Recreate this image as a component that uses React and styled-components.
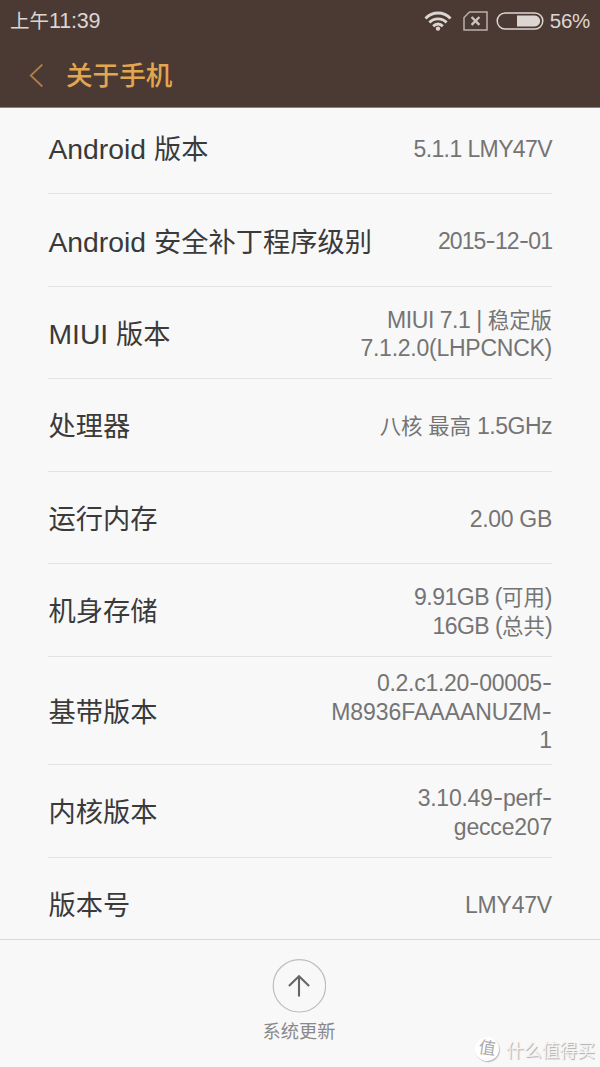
import React from 'react'
import styled, { createGlobalStyle } from 'styled-components'

const GlobalStyle = createGlobalStyle`
  * {
    box-sizing: border-box;
  }

  body {
    margin: 0;
    background: #f8f8f8;
    font-family: "Liberation Sans", "Noto Sans CJK SC", sans-serif;
  }
`

const Phone = styled.div`
  display: flex;
  flex-direction: column;
  width: 600px;
  height: 1067px;
  overflow: hidden;
  background: #f8f8f8;
`

const Header = styled.header`
  flex: none;
  height: 108px;
  background: #4b3a33;
  border-bottom: 1px solid #8b807b;
`

const StatusBar = styled.div`
  display: flex;
  align-items: center;
  height: 42px;
  padding: 0 10px 0 10px;
  color: #dcd6d3;
  font-size: 19.5px;
`

const Time = styled.span`
  flex: 1;
  line-height: 24px;
`

const StatusIcons = styled.div`
  display: flex;
  align-items: center;
  gap: 6px;
`

const TitleBar = styled.div`
  display: flex;
  align-items: center;
  height: 65px;
  padding: 2px 0 0 28px;
  gap: 22px;
`

const Title = styled.h1`
  margin: 0;
  color: #e3a650;
  font-size: 26.6px;
  font-weight: 500;
  line-height: 40px;
`

const List = styled.main`
  flex: 1;
  min-height: 0;
  overflow: hidden;
  padding: 0 48px;
`

const Rows = styled.div`
  margin-top: -6px;
`

const Row = styled.div`
  display: flex;
  align-items: center;
  justify-content: space-between;
  height: ${p => p.$height}px;
  padding-top: 3px;
  border-bottom: 1px solid #e3e3e3;
`

const Label = styled.div`
  padding: 1px 0 0 .5px;
  color: #3a3a3a;
  font-size: 27.25px;
  line-height: 34px;
  white-space: pre;
`

const Value = styled.div`
  color: #747474;
  font-size: 21.4px;
  text-align: right;
`

const Line = styled.div`
  height: 28.4px;
  line-height: 28.4px;
  white-space: pre;
`

const Latin = styled.span`
  font-size: ${p => p.$size}px;
  letter-spacing: ${p => p.$track || 0}px;
`

const Hyphen = styled.span`
  font-family: Inter, sans-serif;
  font-size: 23px;
  line-height: 1;
`

const Footer = styled.footer`
  position: relative;
  flex: none;
  display: flex;
  flex-direction: column;
  align-items: center;
  height: 128px;
  padding: 19px 2px 0 0;
  border-top: 1px solid #d9d9d9;
`

const UpdateLabel = styled.span`
  margin-top: 5px;
  color: #898989;
  font-size: 18.2px;
  line-height: 28px;
`

const Watermark = styled.div`
  position: absolute;
  right: 5px;
  bottom: 5px;
  display: flex;
  align-items: center;
  gap: 7px;
  height: 26px;
  color: #f4f4f4;
  font-size: 17.8px;
  text-shadow: 1px 1px 1px #aaa;
`

const Seal = styled.span`
  width: 24px;
  height: 24px;
  border-radius: 50%;
  background: #fff;
  box-shadow: 1px 1px 1px #bbb;
  color: #aaa;
  font-size: 17px;
  line-height: 23px;
  text-align: center;
  text-shadow: none;
  transform: rotate(8deg);
`

const rows = [
  { label: 'Android 版本', height: 92, lines: [['5.1.1 LMY47V', -0.6]] },
  { label: 'Android 安全补丁程序级别', height: 93, lines: [['2015-12-01', -0.95]] },
  { label: 'MIUI 版本', height: 92, lines: [['MIUI 7.1 | 稳定版', -0.45], ['7.1.2.0(LHPCNCK)', -0.25]] },
  { label: '处理器', height: 93, lines: [['八核 最高 1.5GHz', -0.5]] },
  { label: '运行内存', height: 92, lines: [['2.00 GB', -0.3]] },
  { label: '机身存储', height: 93, lines: [['9.91GB (可用)', -0.5], ['16GB (总共)', -0.55]] },
  { label: '基带版本', height: 108, lines: [['0.2.c1.20-00005-', -0.3], ['M8936FAAAANUZM-', -0.05], ['1', 0]] },
  { label: '内核版本', height: 93, lines: [['3.10.49-perf-', -0.25], ['gecce207', -0.2]] },
  { label: '版本号', height: 93, lines: [['LMY47V', -0.2]] },
]

// Latin runs are set a little larger than the Chinese around them
function Mixed({ text, size, track }) {
  return text.split(/([\x20-\x7e]+)/).filter(Boolean).map((part, i) => (
    /[\x20-\x7e]/.test(part)
      ? (
        <Latin key={i} $size={size} $track={track}>
          {part.split(/(-)/).map((s, j) => s === '-' ? <Hyphen key={j}>-</Hyphen> : s)}
        </Latin>
      )
      : part
  ))
}

function WifiIcon() {
  return (
    <svg width="28" height="20" viewBox="0 0 28 20" fill="none" stroke="#dcd6d3" strokeWidth="2.9">
      <path d="M1.5 7.5C8.5 .2 19.5 .2 26.5 7.5" />
      <path d="M5.4 11.5C10.2 6.6 17.8 6.6 22.6 11.5" />
      <path d="M9.2 15.2C12 12.2 16 12.2 18.8 15.2" />
      <circle cx="14" cy="17.6" r="2.2" fill="#dcd6d3" stroke="none" />
    </svg>
  )
}

function NoSimIcon() {
  return (
    <svg width="25" height="20" viewBox="0 0 25 20" fill="none" stroke="#b9b1ad">
      <path d="M6.5 1H24V19H1V6.5Z" strokeWidth="1.5" />
      <path d="M8.6 6L16.4 13.8M16.4 6L8.6 13.8" stroke="#cbc4c1" strokeWidth="2.4" />
    </svg>
  )
}

const SimSlot = styled.span`
  display: flex;
  margin: 0 2px 0 5px;
`

function BatteryIcon() {
  return (
    <svg width="48" height="18" viewBox="0 0 48 18">
      <rect x="1.2" y="1" width="45.6" height="16" rx="8" fill="none" stroke="#dcd6d3" strokeWidth="1.5" />
      <path d="M21 3.6H38.8A5.4 5.4 0 0 1 38.8 14.4H21Z" fill="#dcd6d3" />
    </svg>
  )
}

function BackIcon() {
  return (
    <svg width="16" height="24" viewBox="0 0 16 24" fill="none" stroke="#b07f46" strokeWidth="1.8">
      <path d="M14.3 .5L2.8 11.5L14.3 22.5" />
    </svg>
  )
}

function UpdateIcon() {
  return (
    <svg width="54" height="54" viewBox="0 0 54 54" fill="none">
      <circle cx="27.4" cy="26.8" r="26.2" stroke="#bdbdbd" strokeWidth="1.2" />
      <path d="M27 37.6V17M16.9 27L27 17.2L37.1 27" stroke="#666" strokeWidth="2.1" />
    </svg>
  )
}

export default function App() {
  return (
    <Phone>
      <GlobalStyle />
      <Header>
        <StatusBar>
          <Time><Mixed text="上午11:39" size={21.5} track={-0.2} /></Time>
          <StatusIcons>
            <WifiIcon />
            <SimSlot><NoSimIcon /></SimSlot>
            <BatteryIcon />
            <Latin $size={20.5} $track={-0.3}>56%</Latin>
          </StatusIcons>
        </StatusBar>
        <TitleBar>
          <BackIcon />
          <Title>关于手机</Title>
        </TitleBar>
      </Header>

      <List>
        <Rows>
          {rows.map(row => (
            <Row key={row.label} $height={row.height}>
              <Label><Mixed text={row.label} size={28.3} /></Label>
              <Value>
                {row.lines.map(([ text, track ]) => (
                  <Line key={text}><Mixed text={text} size={23} track={track} /></Line>
                ))}
              </Value>
            </Row>
          ))}
        </Rows>
      </List>

      <Footer>
        <UpdateIcon />
        <UpdateLabel>系统更新</UpdateLabel>
        <Watermark>
          <Seal>值</Seal>
          什么值得买
        </Watermark>
      </Footer>
    </Phone>
  )
}
